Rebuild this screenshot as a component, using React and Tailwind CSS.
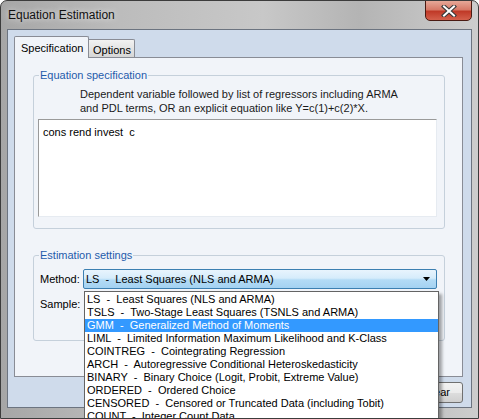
import React from 'react'

const methods = [
  ['LS', 'Least Squares (NLS and ARMA)'],
  ['TSLS', 'Two-Stage Least Squares (TSNLS and ARMA)'],
  ['GMM', 'Generalized Method of Moments'],
  ['LIML', 'Limited Information Maximum Likelihood and K-Class'],
  ['COINTREG', 'Cointegrating Regression'],
  ['ARCH', 'Autoregressive Conditional Heteroskedasticity'],
  ['BINARY', 'Binary Choice (Logit, Probit, Extreme Value)'],
  ['ORDERED', 'Ordered Choice'],
  ['CENSORED', 'Censored or Truncated Data (including Tobit)'],
  ['COUNT', 'Integer Count Data'],
]

function CloseButton() {
  return (
    <div className="absolute top-[-1px] right-[6px] w-[47px] h-[21px] rounded-b-[5px] border border-[#4a1a12] bg-[linear-gradient(180deg,#e6a898_0%,#d77a68_45%,#c03a28_55%,#d4604c_100%)] flex items-center justify-center">
      <svg width="16" height="12" viewBox="0 0 16 12">
        <path d="M3 1.5 L13 10.5 M13 1.5 L3 10.5" stroke="#3a3a3a" strokeWidth="4.2" strokeLinecap="square" />
        <path d="M3 1.5 L13 10.5 M13 1.5 L3 10.5" stroke="#ffffff" strokeWidth="2" strokeLinecap="square" />
      </svg>
    </div>
  )
}

function MethodList() {
  return (
    <div className="absolute left-0 top-[21px] w-[355px] bg-white border border-[#646464] pt-px shadow-[3px_3px_3px_rgba(0,0,0,0.35)] z-20">
      {methods.map(([code, label]) => (
        <div
          key={code}
          className={`h-[13px] leading-[13px] pl-[2px] whitespace-pre ${code === 'GMM' ? 'bg-[#3399ff] text-white' : 'text-black'}`}
        >
          {`${code}  -  ${label}`}
        </div>
      ))}
    </div>
  )
}

export default function App() {
  return (
    <div className="relative w-[479px] h-[419px] overflow-hidden border border-[#3c3c3c] rounded-t-[7px] bg-[linear-gradient(90deg,#a6a6a6_0%,#bcbcbc_25%,#c8c8c8_55%,#b4b4b4_75%,#cdcdcd_100%)] font-['Liberation_Sans',Arial,sans-serif] text-[11px] text-black">
      {/* title bar */}
      <div className="h-[28px] flex items-center pl-[7px]">
        <span className="text-[12px] text-[#111] [text-shadow:0_0_6px_rgba(255,255,255,0.9)]">Equation Estimation</span>
      </div>
      <CloseButton />

      {/* client area */}
      <div className="mx-[6px] h-[379px] border border-[#6c7480] bg-[#cfdbeb] pt-[6px] px-[6px]">
        {/* tabs */}
        <div className="flex items-end h-[21px]">
          <div className="relative z-10 -mb-px w-[75px] h-[22px] border border-b-0 border-[#898c95] bg-[#f1f4f9] rounded-t-[2px] pl-[6px] pt-[3px]">
            Specification
          </div>
          <div className="w-[46px] h-[18px] border border-l-0 border-b-0 border-[#898c95] bg-[linear-gradient(180deg,#f2f2f2,#e4e4e4_50%,#d6d6d6)] rounded-tr-[2px] pl-[4px] pt-[2px]">
            Options
          </div>
        </div>

        {/* tab panel */}
        <div className="w-[449px] h-[320px] border border-[#898c95] bg-[#f1f4f9]">
          <fieldset className="ml-[18px] mt-[10px] w-[412px] h-[161px] border border-[#c5d0db] rounded-[3px]">
            <legend className="ml-[5px] px-[1px] leading-[14px] text-[#1f5bab]">Equation specification</legend>
            <div className="mt-[5px] pl-[46px] leading-[14px] text-[#1a1a1a]">
              <div>Dependent variable followed by list of regressors including ARMA</div>
              <div>and PDL terms, OR an explicit equation like Y=c(1)+c(2)*X.</div>
            </div>
            <div className="mt-[4px] ml-[4px] w-[399px] h-[98px] bg-white border-t border-l border-[#9a9a9a] border-r-[#e6ebf1] border-b-[#e6ebf1] border-r border-b pl-[4px] pt-[4px] whitespace-pre">
              cons rend invest  c
            </div>
          </fieldset>

          <fieldset className="ml-[18px] mt-[19px] w-[412px] h-[93px] border border-[#c5d0db] rounded-[3px]">
            <legend className="ml-[5px] px-[1px] leading-[14px] text-[#1f5bab]">Estimation settings</legend>
            <div className="mt-[7px] pl-[6px] flex items-center h-[20px]">
              <span className="w-[43px]">Method:</span>
              <div className="relative w-[354px] h-[20px] border border-[#3c7fb1] rounded-[2px] bg-[linear-gradient(180deg,#e8f4fd_0%,#d6ecfb_45%,#b3dbf6_55%,#a4d2f2_100%)] flex items-center pl-[2px] pr-[6px] whitespace-pre">
                <span className="flex-1">LS  -  Least Squares (NLS and ARMA)</span>
                <svg width="7" height="4" viewBox="0 0 7 4">
                  <path d="M0 0 H7 L3.5 4 Z" fill="#000" />
                </svg>
                <MethodList />
              </div>
            </div>
            <div className="mt-[5px] pl-[6px] flex items-center h-[20px]">
              <span>Sample:</span>
            </div>
          </fieldset>
        </div>

        {/* buttons */}
        <div className="flex justify-end mt-[5px] pr-[2px]">
          <button className="w-[60px] h-[21px] border border-[#707070] rounded-[3px] bg-[linear-gradient(180deg,#f2f2f2_0%,#ebebeb_50%,#dddddd_51%,#cfcfcf_100%)] text-[11px] text-right pr-[12px]">
            Clear
          </button>
        </div>
      </div>
    </div>
  )
}
